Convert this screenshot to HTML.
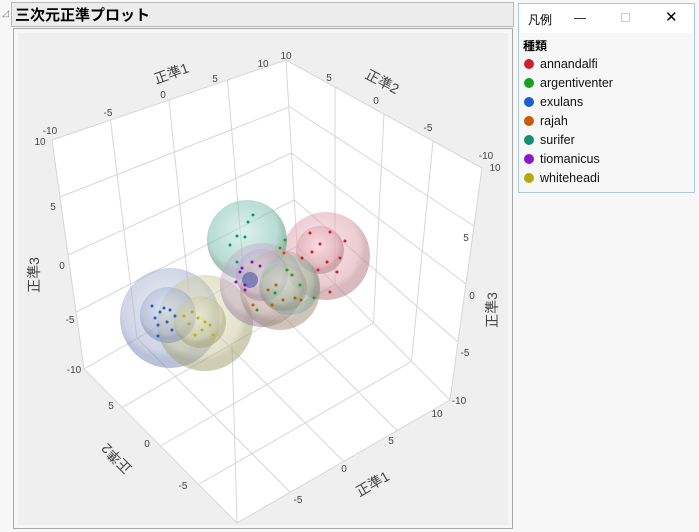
<!DOCTYPE html>
<html><head><meta charset="utf-8"><style>
body{margin:0;width:699px;height:532px;background:#f7f7f7;font-family:"Liberation Sans","Noto Sans CJK JP",sans-serif;position:relative;overflow:hidden}
.hdr{position:absolute;left:11px;top:2px;width:501px;height:23px;border:1px solid #b8b8b8;background:#ececec}
.hdr b{position:absolute;left:3px;top:1px;font-size:15px;font-weight:bold;color:#000;font-family:"Liberation Sans","Noto Sans CJK JP",sans-serif}
.tri{position:absolute;left:2px;top:8px;font-size:9px;color:#777}
.frame{position:absolute;left:13px;top:28px;width:498px;height:499px;border:1px solid #a8a8a8;background:#f7f7f7}
svg{position:absolute;left:0;top:0}
.leg{position:absolute;left:518px;top:3px;width:175px;height:188px;border:1px solid #a9c9e0;background:#f7f7f7}
.lt{height:29px;background:#fff;position:relative;font-size:12px}
.it{position:absolute;left:5px;font-size:12.5px;color:#111}
.it i{display:inline-block;width:10px;height:10px;border-radius:50%;margin-right:6px;vertical-align:-1px}
</style></head><body>
<div class="tri">◿</div>
<div class="hdr"><b>三次元正準プロット</b></div>
<div class="frame"></div>
<svg width="699" height="532">
<defs>
<radialGradient id="gG" cx="45%" cy="40%"><stop offset="0" stop-color="#bfe8dc" stop-opacity=".55"/><stop offset=".85" stop-color="#7fbfae" stop-opacity=".55"/><stop offset="1" stop-color="#6aa090" stop-opacity=".6"/></radialGradient>
<radialGradient id="gR" cx="45%" cy="40%"><stop offset="0" stop-color="#f6d0d6" stop-opacity=".5"/><stop offset=".85" stop-color="#d89aa4" stop-opacity=".5"/><stop offset="1" stop-color="#b88088" stop-opacity=".55"/></radialGradient>
<radialGradient id="gB" cx="45%" cy="40%"><stop offset="0" stop-color="#d4dcee" stop-opacity=".5"/><stop offset=".85" stop-color="#9eaacb" stop-opacity=".5"/><stop offset="1" stop-color="#8090b8" stop-opacity=".55"/></radialGradient>
<radialGradient id="gY" cx="45%" cy="40%"><stop offset="0" stop-color="#eeeccc" stop-opacity=".5"/><stop offset=".85" stop-color="#c8c69a" stop-opacity=".5"/><stop offset="1" stop-color="#a8a678" stop-opacity=".55"/></radialGradient>
<radialGradient id="gP" cx="45%" cy="40%"><stop offset="0" stop-color="#e6d4ea" stop-opacity=".45"/><stop offset=".85" stop-color="#c0a4c6" stop-opacity=".45"/><stop offset="1" stop-color="#9a80a0" stop-opacity=".5"/></radialGradient>
<radialGradient id="gO" cx="45%" cy="40%"><stop offset="0" stop-color="#e8d8c4" stop-opacity=".45"/><stop offset=".85" stop-color="#c4aa90" stop-opacity=".45"/><stop offset="1" stop-color="#a08870" stop-opacity=".5"/></radialGradient>
</defs>
<rect x="18" y="33" width="490" height="492" fill="#efefef"/>
<polygon points="52,140 286,60 297,246 84,369" fill="#fff"/>
<polygon points="286,60 482,168 450,400 297,246" fill="#fff"/>
<polygon points="84,369 297,246 450,400 237,523" fill="#fff"/>
<g stroke="#d6d6d6" stroke-width="1" fill="none">
<polyline points="52,140 286,60 482,168"/><polyline points="52,140 84,369 237,523 450,400 482,168"/>
<line x1="286" y1="60" x2="297" y2="246"/><line x1="84" y1="369" x2="297" y2="246"/><line x1="297" y1="246" x2="450" y2="400"/>
<line x1="60" y1="197" x2="289" y2="107"/><line x1="68" y1="255" x2="291.5" y2="153"/><line x1="76" y1="312" x2="294" y2="200"/>
<line x1="110.5" y1="120" x2="137" y2="338"/><line x1="169" y1="100" x2="190.5" y2="307.5"/><line x1="227.5" y1="80" x2="244" y2="277"/>
<line x1="289" y1="106.5" x2="474" y2="226"/><line x1="291.5" y1="153" x2="466" y2="284"/><line x1="294" y1="199.5" x2="458" y2="342"/>
<line x1="335" y1="87" x2="335" y2="285.5"/><line x1="384" y1="114" x2="373.5" y2="323"/><line x1="433" y1="141" x2="411.5" y2="361.5"/>
<line x1="122" y1="407.5" x2="335" y2="284.5"/><line x1="160.5" y1="446" x2="373.5" y2="323"/><line x1="198.5" y1="484.5" x2="411.5" y2="361.5"/>
<line x1="137" y1="338" x2="290" y2="492"/><line x1="190.5" y1="307.5" x2="343.5" y2="461.5"/><line x1="244" y1="277" x2="397" y2="430.5"/>
<line x1="232" y1="345" x2="237" y2="523"/>
</g>
<circle cx="170" cy="318" r="50" fill="url(#gB)"/>
<circle cx="205" cy="323" r="48" fill="url(#gY)"/>
<circle cx="168" cy="315" r="28" fill="url(#gB)"/>
<circle cx="200" cy="322" r="26" fill="url(#gY)"/>
<circle cx="326" cy="256" r="44" fill="url(#gR)"/>
<circle cx="320" cy="250" r="24" fill="url(#gR)"/>
<circle cx="247" cy="240" r="40" fill="url(#gG)"/>
<circle cx="262" cy="285" r="42" fill="url(#gP)"/>
<circle cx="280" cy="290" r="40" fill="url(#gO)"/>
<circle cx="262" cy="275" r="26" fill="url(#gP)"/>
<circle cx="283" cy="287" r="24" fill="url(#gO)"/>
<circle cx="290" cy="285" r="30" fill="url(#gG)" opacity=".6"/>
<circle cx="250" cy="280" r="8" fill="#6a70b0" opacity=".8"/>
<g fill="#2060d0"><circle cx="152" cy="306" r="1.5"/><circle cx="160" cy="312" r="1.5"/><circle cx="155" cy="318" r="1.5"/><circle cx="164" cy="308" r="1.5"/><circle cx="170" cy="310" r="1.5"/><circle cx="158" cy="325" r="1.5"/><circle cx="167" cy="322" r="1.5"/><circle cx="175" cy="316" r="1.5"/><circle cx="158" cy="336" r="1.5"/><circle cx="172" cy="330" r="1.5"/></g>
<g fill="#c0b000"><circle cx="192" cy="312" r="1.5"/><circle cx="198" cy="318" r="1.5"/><circle cx="205" cy="322" r="1.5"/><circle cx="189" cy="324" r="1.5"/><circle cx="202" cy="330" r="1.5"/><circle cx="210" cy="325" r="1.5"/><circle cx="195" cy="335" r="1.5"/><circle cx="213" cy="335" r="1.5"/><circle cx="184" cy="316" r="1.5"/></g>
<g fill="#d02030"><circle cx="310" cy="233" r="1.5"/><circle cx="330" cy="232" r="1.5"/><circle cx="320" cy="244" r="1.5"/><circle cx="312" cy="252" r="1.5"/><circle cx="327" cy="262" r="1.5"/><circle cx="340" cy="258" r="1.5"/><circle cx="337" cy="272" r="1.5"/><circle cx="318" cy="270" r="1.5"/><circle cx="345" cy="241" r="1.5"/><circle cx="330" cy="292" r="1.5"/><circle cx="302" cy="258" r="1.5"/></g>
<g fill="#109080"><circle cx="253" cy="215" r="1.5"/><circle cx="248" cy="222" r="1.5"/><circle cx="237" cy="236" r="1.5"/><circle cx="230" cy="245" r="1.5"/><circle cx="245" cy="237" r="1.5"/><circle cx="237" cy="262" r="1.5"/></g>
<g fill="#18a020"><circle cx="285" cy="240" r="1.5"/><circle cx="280" cy="248" r="1.5"/><circle cx="292" cy="275" r="1.5"/><circle cx="300" cy="285" r="1.5"/><circle cx="275" cy="293" r="1.5"/><circle cx="314" cy="298" r="1.5"/><circle cx="287" cy="270" r="1.5"/><circle cx="257" cy="310" r="1.5"/></g>
<g fill="#8010c0"><circle cx="240" cy="272" r="1.5"/><circle cx="236" cy="282" r="1.5"/><circle cx="245" cy="290" r="1.5"/><circle cx="252" cy="262" r="1.5"/><circle cx="242" cy="268" r="1.5"/><circle cx="260" cy="266" r="1.5"/><circle cx="245" cy="285" r="1.5"/></g>
<g fill="#c05808"><circle cx="268" cy="290" r="1.5"/><circle cx="276" cy="285" r="1.5"/><circle cx="283" cy="300" r="1.5"/><circle cx="295" cy="298" r="1.5"/><circle cx="272" cy="305" r="1.5"/><circle cx="301" cy="300" r="1.5"/><circle cx="253" cy="305" r="1.5"/><circle cx="284" cy="253" r="1.5"/></g>
<g font-family="Liberation Sans,sans-serif" font-size="10" fill="#444" text-anchor="middle">
<text x="50" y="134">-10</text><text x="40" y="145">10</text>
<text x="108" y="116">-5</text><text x="163" y="98">0</text><text x="215" y="82">5</text><text x="263" y="67">10</text><text x="286" y="59">10</text>
<text x="329" y="81">5</text><text x="376" y="104">0</text><text x="428" y="131">-5</text><text x="486" y="159">-10</text><text x="495" y="171">10</text>
<text x="53" y="210">5</text><text x="62" y="269">0</text><text x="70" y="323">-5</text><text x="74" y="373">-10</text>
<text x="466" y="241">5</text><text x="472" y="299">0</text><text x="465" y="356">-5</text><text x="459" y="404">-10</text><text x="437" y="417">10</text>
<text x="391" y="444">5</text><text x="344" y="472">0</text><text x="298" y="503">-5</text>
<text x="111" y="409">5</text><text x="147" y="447">0</text><text x="183" y="489">-5</text>
</g>
<g font-family="Liberation Sans,Noto Sans CJK JP,sans-serif" font-size="14" fill="#444" text-anchor="middle">
<text transform="translate(173,78) rotate(-20)">正準1</text>
<text transform="translate(380,86) rotate(28)">正準2</text>
<text transform="translate(39,275) rotate(-90)">正準3</text>
<text transform="translate(497,310) rotate(-90)">正準3</text>
<text transform="translate(375,488) rotate(-30)">正準1</text>
<text transform="translate(120,455) rotate(225)">正準2</text>
</g>
</svg>
<div class="leg">
<div class="lt"><span style="position:absolute;left:9px;top:7px">凡例</span><span style="position:absolute;left:55px;top:14px;width:12px;border-top:1px solid #333"></span><span style="position:absolute;left:102px;top:9px;width:7px;height:7px;border:1px solid #ccc"></span><span style="position:absolute;left:146px;top:4px;font-size:15px">✕</span></div>
<div style="position:absolute;left:4px;top:33px;font-size:12px;font-weight:bold">種類</div>
<div class="it" style="top:53px"><i style="background:#d01f2f"></i>annandalfi</div>
<div class="it" style="top:72px"><i style="background:#18a020"></i>argentiventer</div>
<div class="it" style="top:91px"><i style="background:#1a5fd0"></i>exulans</div>
<div class="it" style="top:110px"><i style="background:#c45c0a"></i>rajah</div>
<div class="it" style="top:129px"><i style="background:#0f9070"></i>surifer</div>
<div class="it" style="top:148px"><i style="background:#8a18c8"></i>tiomanicus</div>
<div class="it" style="top:167px"><i style="background:#b8a810"></i>whiteheadi</div>
</div>
</body></html>
